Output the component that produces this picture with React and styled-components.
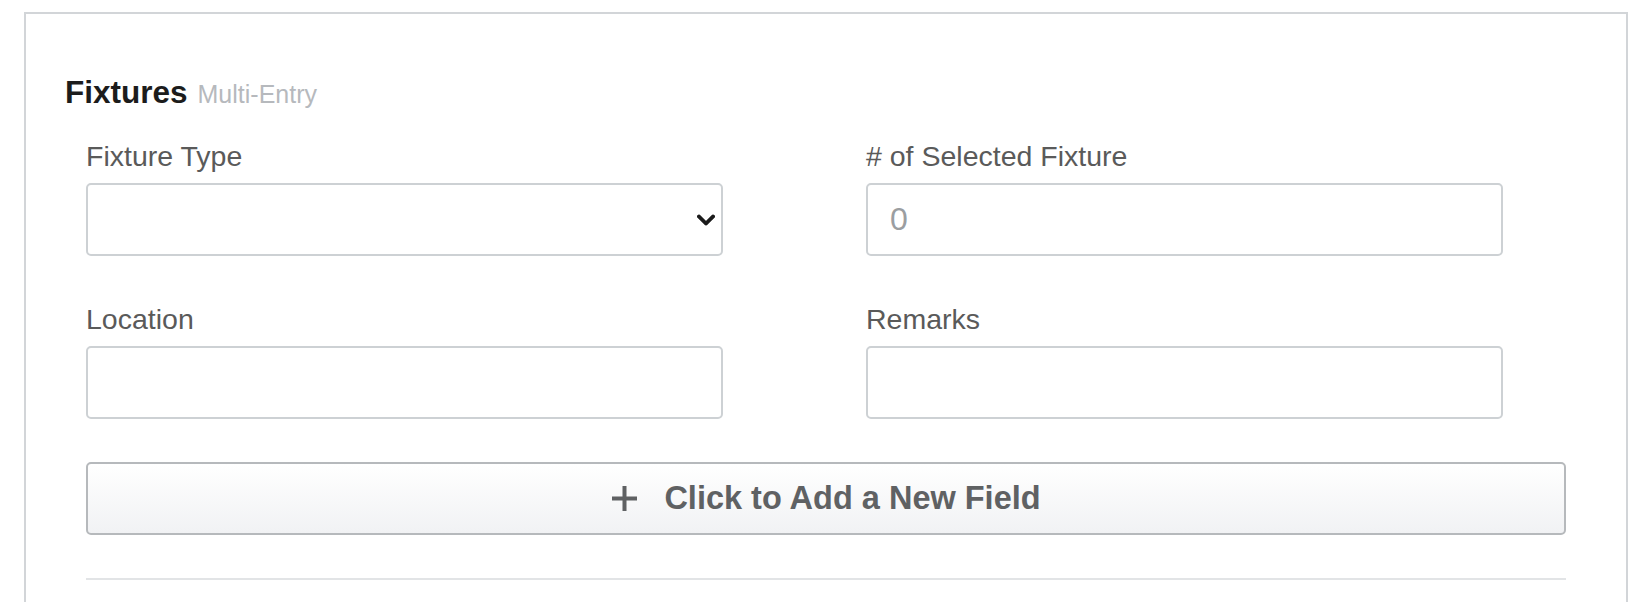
import React from "react";
import { styled, createGlobalStyle } from "styled-components";

const GlobalStyle = createGlobalStyle`
  html, body {
    margin: 0;
    padding: 0;
    background: #ffffff;
  }
  body {
    font-family: "Liberation Sans", Arial, Helvetica, sans-serif;
  }
  * {
    box-sizing: border-box;
  }
`;

function Chevron() {
  return (
    <svg width="18" height="11" viewBox="0 0 18 11" fill="none">
      <path
        d="M2 2l7 7 7-7"
        stroke="#1b1b1b"
        strokeWidth="3.8"
        strokeLinecap="square"
      />
    </svg>
  );
}

function Plus() {
  return (
    <svg width="27" height="27" viewBox="0 0 27 27" fill="none">
      <path d="M13.5 1v25M1 13.5h25" stroke="#5f6163" strokeWidth="4" />
    </svg>
  );
}

function Field(props) {
  const { label, type, placeholder } = props;
  return (
    <FieldBox>
      <Label>{label}</Label>
      {type === "select" ? (
        <SelectWrap>
          <Select defaultValue="">
            <option value=""></option>
          </Select>
          <ChevronSlot>
            <Chevron />
          </ChevronSlot>
        </SelectWrap>
      ) : (
        <Input type="text" placeholder={placeholder} />
      )}
    </FieldBox>
  );
}

function App() {
  return (
    <Page>
      <GlobalStyle />
      <Panel>
        <Heading>
          <Title>Fixtures</Title>
          <Subtitle>Multi-Entry</Subtitle>
        </Heading>
        <Body>
          <FieldGrid>
            <Field label="Fixture Type" type="select" />
            <Field label="# of Selected Fixture" placeholder="0" />
            <Field label="Location" />
            <Field label="Remarks" />
          </FieldGrid>
          <AddButton type="button">
            <Plus />
            <span>Click to Add a New Field</span>
          </AddButton>
          <Divider />
        </Body>
      </Panel>
    </Page>
  );
}

const Page = styled.div`
  padding: 12px 24px 0 24px;
  height: 602px;
  overflow: hidden;
`;

const Panel = styled.section`
  border: 2px solid #d2d5d8;
  border-bottom: none;
  padding: 60px 60px 40px 39px;
  min-height: 620px;
`;

const Heading = styled.h2`
  margin: 0;
  display: flex;
  align-items: baseline;
  line-height: 36px;
`;

const Title = styled.span`
  font-size: 31.5px;
  font-weight: 700;
  color: #1c1c1c;
`;

const Subtitle = styled.span`
  margin-left: 10px;
  font-size: 25px;
  font-weight: 400;
  color: #b6b9bd;
`;

const Body = styled.div`
  padding-left: 21px;
  margin-top: 28px;
`;

const FieldGrid = styled.div`
  display: grid;
  grid-template-columns: 637px 637px;
  column-gap: 143px;
  row-gap: 47px;
`;

const FieldBox = styled.div`
  display: flex;
  flex-direction: column;
`;

const Label = styled.label`
  font-size: 28.5px;
  line-height: 32px;
  color: #5a5a5a;
  margin-bottom: 11px;
`;

const SelectWrap = styled.div`
  position: relative;
`;

const Select = styled.select`
  width: 100%;
  height: 73px;
  appearance: none;
  border: 2px solid #cdd1d4;
  border-radius: 5px;
  background: #ffffff;
  font-family: inherit;
  font-size: 28px;
  padding: 0 22px;
  outline: none;
`;

const ChevronSlot = styled.span`
  position: absolute;
  right: 8px;
  top: 50%;
  transform: translateY(-50%);
  display: flex;
  pointer-events: none;
`;

const Input = styled.input`
  width: 100%;
  height: 73px;
  border: 2px solid #cdd1d4;
  border-radius: 5px;
  background: #ffffff;
  font-family: inherit;
  font-size: 32px;
  color: #333;
  padding: 0 22px;
  outline: none;
  &::placeholder {
    color: #9b9ea1;
  }
`;

const AddButton = styled.button`
  margin-top: 43px;
  width: 100%;
  height: 73px;
  display: flex;
  align-items: center;
  justify-content: center;
  gap: 26px;
  border: 2px solid #b6b9bc;
  border-radius: 5px;
  background: linear-gradient(to bottom, #ffffff, #f1f2f4);
  font-family: inherit;
  font-size: 32.5px;
  font-weight: 700;
  color: #5f6163;
  cursor: pointer;
`;

const Divider = styled.hr`
  margin: 43px 0 0 0;
  border: none;
  border-top: 2px solid #e2e4e6;
`;

export default App;
